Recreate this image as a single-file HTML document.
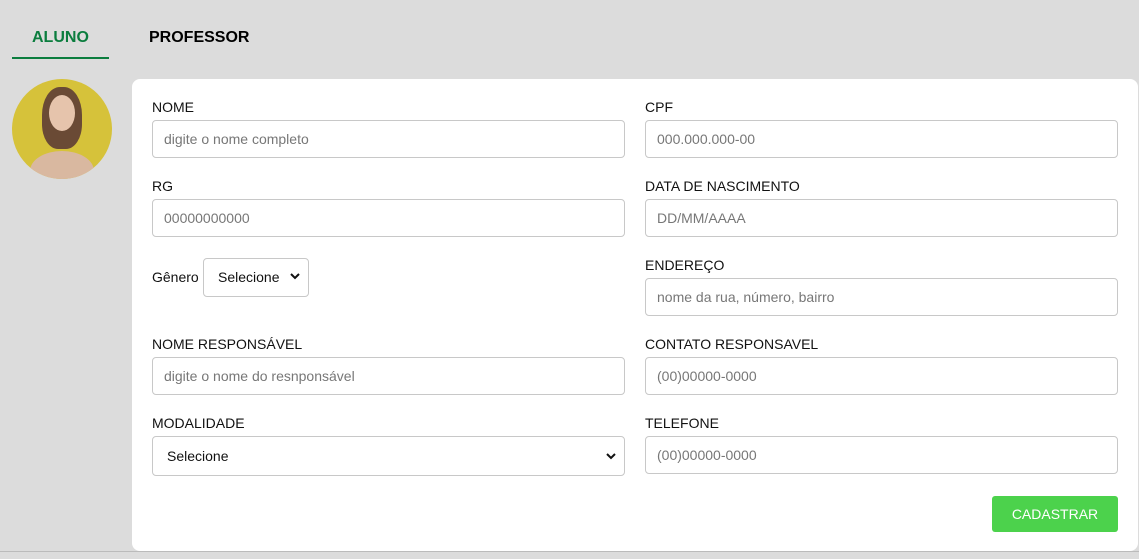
<!DOCTYPE html>
<html><head><style>
*{margin:0;padding:0;box-sizing:border-box}
body{width:1139px;height:559px;background:#dcdcdc;font-family:"Liberation Sans",Arial,sans-serif;position:relative;overflow:hidden}
.a{position:absolute}
.tab{font-weight:bold;font-size:16px;top:29px}
.card{left:132px;top:79px;width:1006px;height:472px;background:#fff;border-radius:8px}
.lbl{font-size:14px;color:#111}
.inp{height:38px;border:1px solid #c8c8c8;border-radius:4px;font-size:14px;color:#777;padding:10px 0 0 11px;background:#fff}
.sel{color:#111;padding-left:14px}
.chev{position:absolute;right:8px;top:13px;width:10px;height:8px}
</style></head><body>
<div class="a tab" style="left:32px;color:#0b7d3e">ALUNO</div>
<div class="a" style="left:12px;top:57px;width:97px;height:2px;background:#0b7d3e"></div>
<div class="a tab" style="left:149px;color:#000">PROFESSOR</div>
<div class="a" style="left:12px;top:79px;width:100px;height:100px;border-radius:50%;background:#d6c23a;overflow:hidden">
<div class="a" style="left:30px;top:8px;width:40px;height:62px;border-radius:45% 45% 40% 40%;background:#6a4a35"></div>
<div class="a" style="left:37px;top:16px;width:26px;height:36px;border-radius:50%;background:#e6c4ac"></div>
<div class="a" style="left:18px;top:72px;width:64px;height:40px;border-radius:50% 50% 0 0;background:#d9b8a0"></div></div>
<div class="a" style="left:0;top:551px;width:1139px;height:1px;background:#bbb"></div>
<div class="a card"></div>

<div class="a lbl" style="left:152px;top:99px">NOME</div>
<div class="a inp" style="left:152px;top:120px;width:473px">digite o nome completo</div>
<div class="a lbl" style="left:645px;top:99px">CPF</div>
<div class="a inp" style="left:645px;top:120px;width:473px">000.000.000-00</div>

<div class="a lbl" style="left:152px;top:178px">RG</div>
<div class="a inp" style="left:152px;top:199px;width:473px">00000000000</div>
<div class="a lbl" style="left:645px;top:178px">DATA DE NASCIMENTO</div>
<div class="a inp" style="left:645px;top:199px;width:473px">DD/MM/AAAA</div>

<div class="a lbl" style="left:152px;top:269px">Gênero</div>
<div class="a inp sel" style="left:203px;top:258px;width:106px;height:39px">Selecione<svg class="chev" viewBox="0 0 10 8"><path d="M1 2l4 4 4-4" stroke="#111" stroke-width="2" fill="none"/></svg></div>
<div class="a lbl" style="left:645px;top:257px">ENDEREÇO</div>
<div class="a inp" style="left:645px;top:278px;width:473px">nome da rua, número, bairro</div>

<div class="a lbl" style="left:152px;top:336px">NOME RESPONSÁVEL</div>
<div class="a inp" style="left:152px;top:357px;width:473px">digite o nome do resnponsável</div>
<div class="a lbl" style="left:645px;top:336px">CONTATO RESPONSAVEL</div>
<div class="a inp" style="left:645px;top:357px;width:473px">(00)00000-0000</div>

<div class="a lbl" style="left:152px;top:415px">MODALIDADE</div>
<div class="a inp sel" style="left:152px;top:436px;width:473px;height:40px;padding-top:11px">Selecione<svg class="chev" style="top:15px" viewBox="0 0 10 8"><path d="M1 2l4 4 4-4" stroke="#111" stroke-width="2" fill="none"/></svg></div>
<div class="a lbl" style="left:645px;top:415px">TELEFONE</div>
<div class="a inp" style="left:645px;top:436px;width:473px">(00)00000-0000</div>

<div class="a" style="left:992px;top:496px;width:126px;height:36px;background:#4cd24c;border-radius:3px;color:#fff;font-size:14px;text-align:center;line-height:36px">CADASTRAR</div>
</body></html>
